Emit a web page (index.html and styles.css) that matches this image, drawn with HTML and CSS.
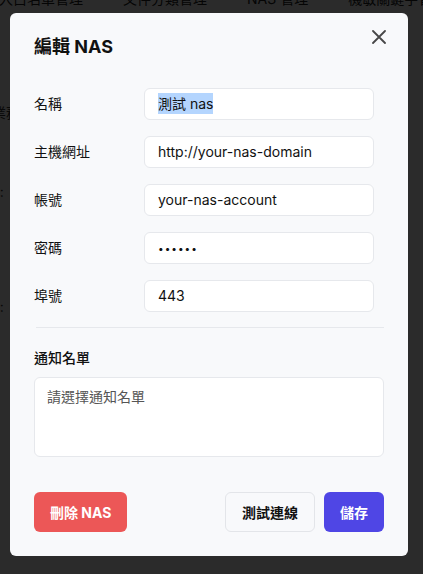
FILE: index.html
```html
<!DOCTYPE html>
<html lang="zh-Hant">
<head>
<meta charset="utf-8">
<title>編輯 NAS</title>
<link rel="stylesheet" href="styles.css">
</head>
<body>
  <div class="page">
    <nav class="tabs">
      <span class="tab">出入白名單管理</span>
      <span class="tab">文件分類管理</span>
      <span class="tab">NAS 管理</span>
      <span class="tab">機敏關鍵字管理</span>
    </nav>
    <div class="rows">
      <div class="row-frag r1">業務</div>
      <div class="row-frag r2">§:</div>
      <div class="row-frag r3">§:</div>
    </div>
  </div>

  <div class="overlay">
    <div class="modal">
      <h2 class="title">編輯 NAS</h2>
      <button class="close" aria-label="關閉">
        <svg width="14" height="14" viewBox="0 0 14 14"><path d="M1 1L13 13M13 1L1 13" stroke="#474747" stroke-width="1.8" stroke-linecap="round" fill="none"/></svg>
      </button>

      <div class="form">
        <label class="label">名稱</label>
        <div class="field"><span class="sel">測試 nas</span></div>

        <label class="label">主機網址</label>
        <div class="field">http://your-nas-domain</div>

        <label class="label">帳號</label>
        <div class="field">your-nas-account</div>

        <label class="label">密碼</label>
        <div class="field dots">••••••</div>

        <label class="label">埠號</label>
        <div class="field">443</div>
      </div>

      <hr class="divider">

      <div class="notify-label">通知名單</div>
      <div class="textarea">請選擇通知名單</div>

      <div class="footer">
        <button class="btn btn-danger">刪除 NAS</button>
        <div class="right">
          <button class="btn btn-outline">測試連線</button>
          <button class="btn btn-primary">儲存</button>
        </div>
      </div>
    </div>
  </div>
</body>
</html>
```

FILE: styles.css
```css
* { box-sizing: border-box; }

html, body {
  margin: 0;
  padding: 0;
  width: 423px;
  height: 574px;
  overflow: hidden;
}

body {
  position: relative;
  background: #ffffff;
  font-family: Inter, "Noto Sans CJK TC", sans-serif;
  color: #111;
}

.page {
  width: 423px;
  height: 574px;
}

.tabs {
  display: flex;
  gap: 40px;
  margin-top: -11px;
  margin-left: -15px;
  white-space: nowrap;
  font-size: 14px;
  line-height: 20px;
  color: #222;
}

.rows {
  margin-left: -8px;
  font-size: 14px;
  line-height: 20px;
  color: #333;
}
.row-frag { height: 20px; }
.r1 { margin-top: 94px; }
.r2 { margin-top: 59px; }
.r3 { margin-top: 95px; }

.overlay {
  position: absolute;
  inset: 0;
  background: rgba(0, 0, 0, 0.83);
  padding: 13px 0 0 10px;
}

.modal {
  position: relative;
  width: 398px;
  background: #f8f9fb;
  border-radius: 6px;
  padding: 24px;
}

.title {
  margin: 0 0 31px;
  font-size: 18px;
  line-height: 20px;
  font-weight: 700;
  color: #111;
}

.close {
  position: absolute;
  top: 12px;
  right: 17px;
  width: 24px;
  height: 24px;
  padding: 0;
  border: 0;
  background: transparent;
  display: flex;
  align-items: center;
  justify-content: center;
}

.form {
  display: grid;
  grid-template-columns: 110px 230px;
  row-gap: 16px;
  align-items: center;
}

.label {
  font-size: 14px;
  line-height: 20px;
  color: #111;
}

.field {
  height: 32px;
  background: #fff;
  border: 1px solid #e6e8ec;
  border-radius: 6px;
  padding: 0 13px;
  font-size: 14px;
  line-height: 30px;
  color: #111;
  white-space: nowrap;
  overflow: hidden;
}

.sel {
  background: #b4d5fe;
  padding: 2px 0;
}

.dots {
  font-size: 10px;
  letter-spacing: 1px;
}

.divider {
  margin: 15px 0 20px 2px;
  border: 0;
  border-top: 1px solid #e6e8ec;
  height: 0;
}

.notify-label {
  font-size: 14px;
  line-height: 20px;
  font-weight: 500;
  margin-bottom: 9px;
}

.textarea {
  height: 80px;
  background: #fff;
  border: 1px solid #e6e8ec;
  border-radius: 6px;
  padding: 9px 12px;
  font-size: 14px;
  line-height: 20px;
  color: #555;
}

.footer {
  margin-top: 35px;
  display: flex;
  justify-content: space-between;
  align-items: center;
}

.right {
  display: flex;
  gap: 9px;
}

.btn {
  height: 40px;
  border-radius: 6px;
  padding: 0 16px;
  font-family: Inter, "Noto Sans CJK TC", sans-serif;
  font-size: 14px;
  font-weight: 700;
  border: 1px solid transparent;
}

.btn-danger {
  background: #ec5757;
  color: #fff;
  padding: 0 15px;
}

.btn-outline {
  background: #f8f9fb;
  border-color: #e3e5e9;
  color: #111;
}

.btn-primary {
  background: #4f46e5;
  color: #fff;
  padding: 0 15px;
}
```
